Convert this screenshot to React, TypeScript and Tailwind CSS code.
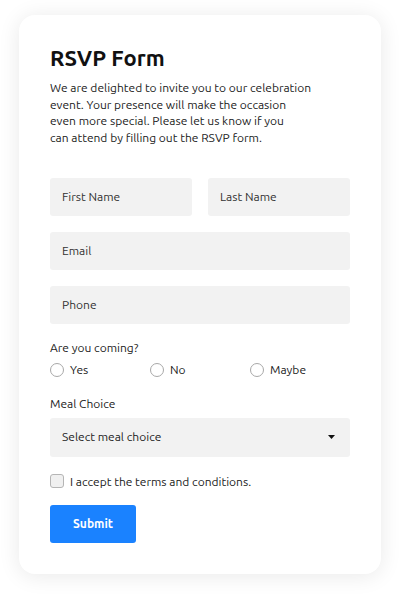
import { useState } from "react";

const font = { fontFamily: '"Ubuntu", Lato, "Noto Sans", sans-serif' };

function Field({ placeholder, type = "text" }: { placeholder: string; type?: string }) {
  return (
    <input
      type={type}
      placeholder={placeholder}
      className="h-[38px] w-full rounded-[3px] bg-[#f2f2f2] px-3 text-[12px] text-[#222] outline-none placeholder:text-[#333]"
    />
  );
}

export default function App() {
  const [coming, setComing] = useState("");

  return (
    <div className="min-h-[598px] bg-white px-[19px] pt-[15px]" style={font}>
      <form
        className="flex flex-col rounded-2xl bg-white px-[31px] pb-[31px] pt-[28px] shadow-[0_2px_22px_rgba(0,0,0,0.09)]"
        onSubmit={(e) => e.preventDefault()}
      >
        <h1 className="text-[22px] font-bold leading-[30px] text-[#111]">RSVP Form</h1>
        <p className="mt-[7px] text-[12px] leading-[16.7px] text-[#222]">
          We are delighted to invite you to our celebration
          <br />
          event. Your presence will make the occasion
          <br />
          even more special. Please let us know if you
          <br />
          can attend by filling out the RSVP form.
        </p>

        <div className="mt-[31px] flex flex-col gap-4">
          <div className="grid grid-cols-2 gap-4">
            <Field placeholder="First Name" />
            <Field placeholder="Last Name" />
          </div>
          <Field placeholder="Email" type="email" />
          <Field placeholder="Phone" type="tel" />
        </div>

        <div className="mt-[15px] text-[12px] leading-[17px] text-[#222]">Are you coming?</div>
        <div className="mt-[6px] grid grid-cols-3">
          {["Yes", "No", "Maybe"].map((opt) => (
            <label key={opt} className="flex items-center gap-[6px] text-[12px] leading-[16px] text-[#222]">
              <input
                type="radio"
                name="coming"
                checked={coming === opt}
                onChange={() => setComing(opt)}
                className="h-[14px] w-[14px] appearance-none rounded-full border border-[#a8a8a8] bg-white checked:border-[4px] checked:border-[#1a82ff]"
              />
              {opt}
            </label>
          ))}
        </div>

        <div className="mt-[17px] text-[12px] leading-[17px] text-[#222]">Meal Choice</div>
        <div className="relative mt-[6px]">
          <select
            defaultValue=""
            className="h-[39px] w-full appearance-none rounded-[3px] bg-[#f2f2f2] px-3 text-[12px] text-[#222] outline-none"
          >
            <option value="" disabled>
              Select meal choice
            </option>
            <option>Chicken</option>
            <option>Beef</option>
            <option>Vegetarian</option>
          </select>
          <svg
            className="pointer-events-none absolute right-[15px] top-1/2 -translate-y-1/2"
            width="7"
            height="4"
            viewBox="0 0 7 4"
          >
            <path d="M0 0h7L3.5 4z" fill="#111" />
          </svg>
        </div>

        <label className="mt-[16px] flex items-center gap-[6px] text-[12px] leading-[17px] text-[#222]">
          <input
            type="checkbox"
            className="h-[14px] w-[14px] appearance-none rounded-[3px] border border-[#b5b5b5] bg-[#f0f0f0] checked:bg-[#1a82ff]"
          />
          I accept the terms and conditions.
        </label>

        <button
          type="submit"
          className="mt-[15px] h-[38px] w-[86px] rounded-[3px] bg-[#1a82ff] text-[12px] font-bold text-white"
        >
          Submit
        </button>
      </form>
    </div>
  );
}
